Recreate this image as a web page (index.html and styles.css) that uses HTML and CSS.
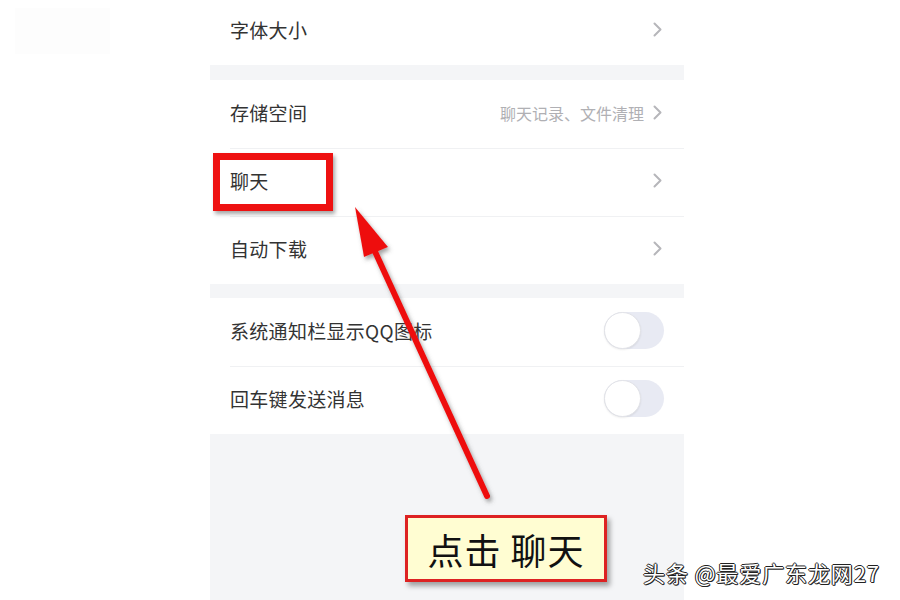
FILE: index.html
```html
<!DOCTYPE html>
<html lang="zh">
<head>
<meta charset="utf-8">
<link rel="stylesheet" href="styles.css">
</head>
<body>
<div class="page">
  <div class="ghost"></div>
  <div class="panel">
    <div class="group">
      <div class="row first"><span class="label">字体大小</span><span class="right"><svg class="chev" width="9" height="15" viewBox="0 0 9 15"><polyline points="1.5,1.5 7.5,7.5 1.5,13.5" fill="none" stroke="#b6b6ba" stroke-width="2" stroke-linecap="round" stroke-linejoin="round"/></svg></span></div>
    </div>
    <div class="gap g1"></div>
    <div class="group">
      <div class="row"><span class="label">存储空间</span><span class="right"><span class="sub">聊天记录、文件清理</span><svg class="chev" width="9" height="15" viewBox="0 0 9 15"><polyline points="1.5,1.5 7.5,7.5 1.5,13.5" fill="none" stroke="#b6b6ba" stroke-width="2" stroke-linecap="round" stroke-linejoin="round"/></svg></span></div>
      <div class="row"><span class="label">聊天</span><span class="right"><svg class="chev" width="9" height="15" viewBox="0 0 9 15"><polyline points="1.5,1.5 7.5,7.5 1.5,13.5" fill="none" stroke="#b6b6ba" stroke-width="2" stroke-linecap="round" stroke-linejoin="round"/></svg></span></div>
      <div class="row"><span class="label">自动下载</span><span class="right"><svg class="chev" width="9" height="15" viewBox="0 0 9 15"><polyline points="1.5,1.5 7.5,7.5 1.5,13.5" fill="none" stroke="#b6b6ba" stroke-width="2" stroke-linecap="round" stroke-linejoin="round"/></svg></span></div>
    </div>
    <div class="gap g2"></div>
    <div class="group">
      <div class="row"><span class="label">系统通知栏显示QQ图标</span><span class="toggle"><span class="knob"></span></span></div>
      <div class="row"><span class="label">回车键发送消息</span><span class="toggle"><span class="knob"></span></span></div>
    </div>
    <div class="rest"></div>
  </div>

  <div class="redbox"></div>
  <svg class="arrow" width="900" height="600" viewBox="0 0 900 600">
    <defs>
      <filter id="sh" x="-20%" y="-20%" width="140%" height="140%">
        <feDropShadow dx="2" dy="3" stdDeviation="2" flood-color="#555" flood-opacity="0.55"/>
      </filter>
    </defs>
    <g filter="url(#sh)">
      <line x1="372" y1="245" x2="487" y2="496" stroke="#ee1111" stroke-width="6" stroke-linecap="round"/>
      <polygon points="355,207 388,247 364,257" fill="#ee1111"/>
    </g>
  </svg>
  <div class="tip">点击 聊天</div>
  <div class="mark">头条 @最爱广东龙网27</div>
</div>
</body>
</html>
```

FILE: styles.css
```css
html, body {
  margin: 0;
  padding: 0;
  background: #ffffff;
}
.page {
  position: relative;
  width: 900px;
  height: 600px;
  overflow: hidden;
  font-family: "Noto Sans CJK SC", "Noto Sans", sans-serif;
}
.ghost {
  position: absolute;
  left: 15px;
  top: 8px;
  width: 95px;
  height: 46px;
  background: #fdfdfd;
}
.panel {
  margin-left: 210px;
  width: 474px;
  height: 600px;
  display: flex;
  flex-direction: column;
  background: #f4f5f7;
}
.group {
  background: #ffffff;
  display: flex;
  flex-direction: column;
}
.row {
  height: 68px;
  display: flex;
  align-items: center;
  justify-content: space-between;
  padding: 0 20px 3px 20px;
  box-sizing: border-box;
  position: relative;
}
.row + .row::before {
  content: "";
  position: absolute;
  left: 20px;
  right: 0;
  top: 0;
  height: 1px;
  background: #f0f1f3;
}
.row.first {
  height: 65px;
  padding-bottom: 6px;
}
.label {
  font-size: 19px;
  color: #333333;
  letter-spacing: 0.3px;
}
.right {
  display: flex;
  align-items: center;
  gap: 9px;
}
.sub {
  font-size: 16px;
  color: #b0b0b4;
}
.chev {
  display: block;
  margin-right: 2px;
}
.gap.g1 { height: 15px; }
.gap.g2 { height: 14px; }
.rest { flex: 1; }
.toggle {
  width: 60px;
  height: 37px;
  border-radius: 19px;
  background: #e8eaf3;
  position: relative;
}
.knob {
  position: absolute;
  left: 0;
  top: 0;
  width: 35px;
  height: 35px;
  border-radius: 50%;
  background: #ffffff;
  border: 1px solid #e2e3e8;
  box-shadow: 0 1px 2px rgba(0,0,0,0.08);
}
.redbox {
  position: absolute;
  left: 213px;
  top: 153px;
  width: 106px;
  height: 44px;
  border: 7px solid #ee1111;
  box-shadow: 2px 3px 4px rgba(0,0,0,0.35);
}
.arrow {
  position: absolute;
  left: 0;
  top: 0;
}
.tip {
  position: absolute;
  left: 405px;
  top: 515px;
  width: 196px;
  height: 61px;
  border: 3px solid #dd2222;
  background: #fffdd2;
  box-shadow: 3px 4px 5px rgba(0,0,0,0.35);
  display: flex;
  align-items: center;
  justify-content: center;
  font-family: "Noto Sans CJK SC", serif;
  font-size: 36px;
  color: #111111;
  letter-spacing: 1px;
}
.mark {
  position: absolute;
  left: 643px;
  top: 556px;
  font-size: 22px;
  letter-spacing: 0.9px;
  color: #ffffff;
  text-shadow: -1px 0 #222, 1px 0 #222, 0 -1px #222, 0 1px #222, 1px 1px #333;
  white-space: nowrap;
}
```
